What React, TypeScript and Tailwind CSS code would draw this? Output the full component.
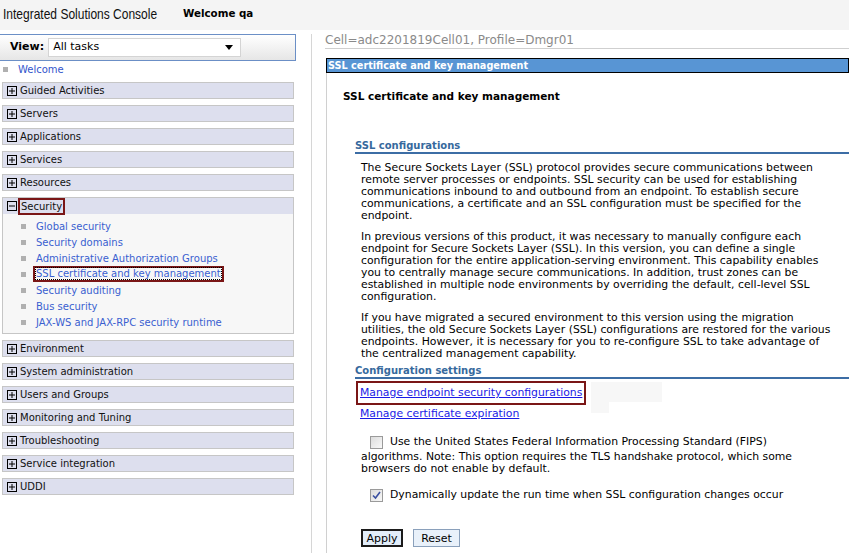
import { ReactNode } from 'react'

const navBefore = ['Guided Activities', 'Servers', 'Applications', 'Services', 'Resources']
const navAfter = [
  'Environment',
  'System administration',
  'Users and Groups',
  'Monitoring and Tuning',
  'Troubleshooting',
  'Service integration',
  'UDDI',
]
const securityLinks = [
  'Global security',
  'Security domains',
  'Administrative Authorization Groups',
  'SSL certificate and key management',
  'Security auditing',
  'Bus security',
  'JAX-WS and JAX-RPC security runtime',
]

function PlusBox({ minus }: { minus?: boolean }) {
  return (
    <svg width="10" height="10" viewBox="0 0 10 10" className="shrink-0">
      <rect x="0.5" y="0.5" width="9" height="9" fill="none" stroke="#000" />
      <line x1="2" y1="5" x2="8" y2="5" stroke="#000" />
      {!minus && <line x1="5" y1="2" x2="5" y2="8" stroke="#000" />}
    </svg>
  )
}

function NavItem({ label }: { label: string }) {
  return (
    <div className="mx-[2px] h-[17px] border border-[#c6c6c6] bg-[#dddfee] flex items-center gap-[3px] pl-[4px] text-[#111]">
      <PlusBox />
      <span>{label}</span>
    </div>
  )
}

function Bullet() {
  return <span className="w-[5px] h-[5px] bg-[#b0b0b0] shrink-0" />
}

function Para({ lines }: { lines: ReactNode[] }) {
  return (
    <div className="pl-[34px]">
      {lines.map((l, i) => (
        <div key={i} className="h-[12px] leading-[12px] whitespace-nowrap">
          {l}
        </div>
      ))}
    </div>
  )
}

function SectionHead({ children }: { children: ReactNode }) {
  return (
    <div className="ml-[28px] font-bold text-[#36699d] text-[10px] leading-[12px] border-b-2 border-[#3c6da5] whitespace-nowrap">
      {children}
    </div>
  )
}

function Checkbox({ checked }: { checked?: boolean }) {
  return (
    <span className="inline-flex w-[13px] h-[13px] border border-[#9a9a9a] bg-gradient-to-br from-[#dcdcdc] to-[#f8f8f8] items-center justify-center shrink-0">
      {checked && (
        <svg width="9" height="9" viewBox="0 0 9 9">
          <path d="M1 4.5 L3.5 7 L8 1" fill="none" stroke="#3a4fa0" strokeWidth="1.6" />
        </svg>
      )}
    </span>
  )
}

export default function App() {
  return (
    <div className="w-[849px] h-[553px] overflow-hidden bg-white text-[10px] text-black font-['DejaVu_Sans',sans-serif]">
      <div className="h-[30px] bg-[#f4f4f4] flex items-center">
        <div className="ml-[3px] w-[180px] -mt-[2px]">
          <span className="text-[15px] font-['Liberation_Sans',sans-serif] text-[#111] origin-left scale-x-[0.8] inline-block whitespace-nowrap">
            Integrated Solutions Console
          </span>
        </div>
        <span className="font-bold text-[10.3px] -mt-[2px]">Welcome qa</span>
      </div>

      <div className="flex">
        <div className="w-[296px] shrink-0 pt-[4px]">
          <div className="h-[27px] border-t border-b border-r border-[#6b8fc6] bg-gradient-to-b from-white to-[#e6e6e6] flex items-center">
            <span className="ml-[10px] font-bold text-[11px]">View:</span>
            <div className="ml-[4px] w-[193px] h-[19px] border border-[#d4d4d4] bg-white flex items-center justify-between px-[4px] text-[11px]">
              <span>All tasks</span>
              <svg width="8" height="5" viewBox="0 0 8 5" className="mr-[3px]">
                <path d="M0 0 H8 L4 5 Z" fill="#000" />
              </svg>
            </div>
          </div>
          <div className="h-[16px] flex items-center gap-[10px] pl-[3px] text-[#3356cc]">
            <Bullet />
            <span>Welcome</span>
          </div>
          <div className="flex flex-col gap-[6px] mt-[5px]">
            {navBefore.map(n => (
              <NavItem key={n} label={n} />
            ))}
            <div className="mx-[2px] border border-[#c6c6c6] bg-[#f7f7f7]">
              <div className="h-[16px] bg-[#dddfee] flex items-center gap-[1px] pl-[4px] text-[#111]">
                <PlusBox minus />
                <span className="border-2 border-[#7a1616] px-[1px] h-[17px] leading-[13px] -mb-[1px]">Security</span>
              </div>
              <div className="pt-[4px] pb-[3px]">
                {securityLinks.map(s => (
                  <div key={s} className="h-[16px] flex items-center pl-[18px] gap-[10px] text-[#3a5fd0]">
                    <Bullet />
                    {s === 'SSL certificate and key management' ? (
                      <span className="-ml-[3px] border-2 border-[#7a1616] px-[1px] leading-[12px]">
                        <span className="outline-1 outline-dotted outline-black">{s}</span>
                      </span>
                    ) : (
                      <span>{s}</span>
                    )}
                  </div>
                ))}
              </div>
            </div>
            {navAfter.map(n => (
              <NavItem key={n} label={n} />
            ))}
          </div>
        </div>

        <div className="w-[16px] shrink-0 border-r border-[#d6d6d6] mt-[4px]" />

        <div className="flex-1 pl-[13px] pt-[2px]">
          <div className="h-[17px] border-b border-[#cfcfcf] text-[12px] text-[#8a8a8a] leading-[17px] whitespace-nowrap">
            Cell=adc2201819Cell01, Profile=Dmgr01
          </div>
          <div className="mt-[9px] ml-[1px] h-[15px] bg-[#5895d4] border border-black text-white font-bold text-[9.7px] leading-[13px] pl-[1px] whitespace-nowrap">
            SSL certificate and key management
          </div>
          <div className="ml-[1px] border-l border-[#d0d0d0] pb-[10px]">
            <div className="pl-[16px] pt-[17px] font-bold text-[10.5px] leading-[12px]">
              SSL certificate and key management
            </div>

            <div className="mt-[38px]">
              <SectionHead>SSL configurations</SectionHead>
            </div>
            <div className="mt-[8px] text-[10.85px] flex flex-col gap-[9px]">
              <Para
                lines={[
                  'The Secure Sockets Layer (SSL) protocol provides secure communications between',
                  'remote server processes or endpoints. SSL security can be used for establishing',
                  'communications inbound to and outbound from an endpoint. To establish secure',
                  'communications, a certificate and an SSL configuration must be specified for the',
                  'endpoint.',
                ]}
              />
              <Para
                lines={[
                  'In previous versions of this product, it was necessary to manually configure each',
                  'endpoint for Secure Sockets Layer (SSL). In this version, you can define a single',
                  'configuration for the entire application-serving environment. This capability enables',
                  'you to centrally manage secure communications. In addition, trust zones can be',
                  'established in multiple node environments by overriding the default, cell-level SSL',
                  'configuration.',
                ]}
              />
              <Para
                lines={[
                  'If you have migrated a secured environment to this version using the migration',
                  'utilities, the old Secure Sockets Layer (SSL) configurations are restored for the various',
                  'endpoints. However, it is necessary for you to re-configure SSL to take advantage of',
                  'the centralized management capability.',
                ]}
              />
            </div>

            <div className="mt-[5px]">
              <SectionHead>Configuration settings</SectionHead>
            </div>

            <div className="pl-[29px] mt-[2px] h-[24px] text-[10.85px] flex items-start">
              <div className="border-2 border-[#7a1616] h-[24px] px-[2px] flex items-center whitespace-nowrap">
                <a className="text-[#1a1ae6] underline">Manage endpoint security configurations</a>
              </div>
              <div className="ml-[5px] mt-[1px]">
                <div className="w-[71px] h-[20px] bg-[#f7f7f7]" />
                <div className="w-[18px] h-[11px] bg-[#f7f7f7]" />
              </div>
            </div>
            <div className="pl-[33px] mt-[3px] text-[10.85px] h-[12px] leading-[12px] whitespace-nowrap">
              <a className="text-[#1a1ae6] underline">Manage certificate expiration</a>
            </div>

            <div className="pl-[34px] mt-[15px] text-[10.85px]">
              <div className="h-[14px] flex items-center whitespace-nowrap pl-[9px] gap-[7px]">
                <Checkbox />
                <span>Use the United States Federal Information Processing Standard (FIPS)</span>
              </div>
              <div className="leading-[12px] mt-[2px] whitespace-nowrap">
                algorithms. Note: This option requires the TLS handshake protocol, which some
              </div>
              <div className="leading-[12px] whitespace-nowrap">browsers do not enable by default.</div>
              <div className="h-[14px] mt-[13px] flex items-center whitespace-nowrap pl-[9px] gap-[7px]">
                <Checkbox checked />
                <span>Dynamically update the run time when SSL configuration changes occur</span>
              </div>
              <div className="mt-[27px] flex gap-[10px] text-[11px]">
                <button className="w-[42px] h-[18px] border-2 border-[#1b1b1b] bg-[#e2edf9] leading-[13px]">Apply</button>
                <button className="w-[47px] h-[18px] border border-[#8aa0bb] bg-[#e9f1fa] leading-[15px]">Reset</button>
              </div>
            </div>
          </div>
        </div>
      </div>
    </div>
  )
}
